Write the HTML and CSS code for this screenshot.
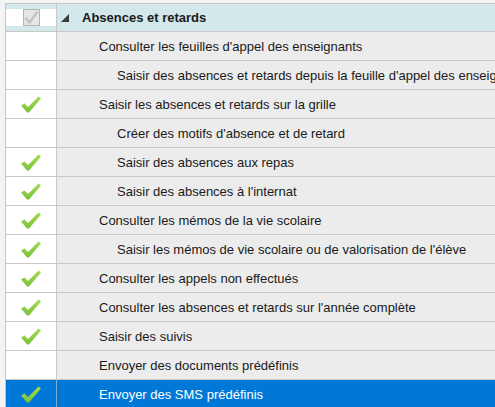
FILE: index.html
```html
<!DOCTYPE html>
<html lang="fr">
<head>
<meta charset="utf-8">
<link rel="stylesheet" href="styles.css">
</head>
<body>
<div class="grid">
  <div class="row head">
    <div class="cell-check"><span class="box"><svg width="17" height="17" viewBox="0 0 17 17"><rect x="0.5" y="0.5" width="16" height="16" fill="#e6e6e6" stroke="#b4b4b4"/><path d="M3 9.5 L6.5 13.5 L14 3.5" fill="none" stroke="#c4c4c4" stroke-width="2.6" stroke-linecap="round" stroke-linejoin="round"/></svg></span></div>
    <div class="cell-label"><span class="tri"></span><span class="title">Absences et retards</span></div>
  </div>
  <div class="row"><div class="cell-check"></div><div class="cell-label l1">Consulter les feuilles d'appel des enseignants</div></div>
  <div class="row"><div class="cell-check"></div><div class="cell-label l2">Saisir des absences et retards depuis la feuille d'appel des enseignants</div></div>
  <div class="row"><div class="cell-check"><svg class="ok" width="22" height="17" viewBox="0 0 22 17"><use href="#chk"/></svg></div><div class="cell-label l1">Saisir les absences et retards sur la grille</div></div>
  <div class="row"><div class="cell-check"></div><div class="cell-label l2">Créer des motifs d'absence et de retard</div></div>
  <div class="row"><div class="cell-check"><svg class="ok" width="22" height="17" viewBox="0 0 22 17"><use href="#chk"/></svg></div><div class="cell-label l2">Saisir des absences aux repas</div></div>
  <div class="row"><div class="cell-check"><svg class="ok" width="22" height="17" viewBox="0 0 22 17"><use href="#chk"/></svg></div><div class="cell-label l2">Saisir des absences à l'internat</div></div>
  <div class="row"><div class="cell-check"><svg class="ok" width="22" height="17" viewBox="0 0 22 17"><use href="#chk"/></svg></div><div class="cell-label l1">Consulter les mémos de la vie scolaire</div></div>
  <div class="row"><div class="cell-check"><svg class="ok" width="22" height="17" viewBox="0 0 22 17"><use href="#chk"/></svg></div><div class="cell-label l2">Saisir les mémos de vie scolaire ou de valorisation de l'élève</div></div>
  <div class="row"><div class="cell-check"><svg class="ok" width="22" height="17" viewBox="0 0 22 17"><use href="#chk"/></svg></div><div class="cell-label l1">Consulter les appels non effectués</div></div>
  <div class="row"><div class="cell-check"><svg class="ok" width="22" height="17" viewBox="0 0 22 17"><use href="#chk"/></svg></div><div class="cell-label l1">Consulter les absences et retards sur l'année complète</div></div>
  <div class="row"><div class="cell-check"><svg class="ok" width="22" height="17" viewBox="0 0 22 17"><use href="#chk"/></svg></div><div class="cell-label l1">Saisir des suivis</div></div>
  <div class="row"><div class="cell-check"></div><div class="cell-label l1">Envoyer des documents prédéfinis</div></div>
  <div class="row sel"><div class="cell-check"><svg class="ok" width="22" height="17" viewBox="0 0 22 17"><use href="#chk"/></svg></div><div class="cell-label l1">Envoyer des SMS prédéfinis</div></div>
</div>
<svg width="0" height="0" class="defs">
  <defs>
    <linearGradient id="g" x1="0" y1="0" x2="0" y2="1">
      <stop offset="0" stop-color="#a6dc52"/>
      <stop offset="1" stop-color="#78c23a"/>
    </linearGradient>
    <path id="chk" d="M1 9.5 L4.5 7.5 L8 11 L18.5 0.5 L21 2.5 L9 16.5 L7 16.5 Z" fill="url(#g)"/>
  </defs>
</svg>
</body>
</html>
```
FILE: styles.css
```css
html, body {
  margin: 0;
  padding: 0;
}
body {
  background: #f4f4f4;
  font-family: "Liberation Sans", Arial, sans-serif;
  font-size: 13px;
  color: #1a1a1a;
  overflow: hidden;
  height: 407px;
}
.grid {
  margin-top: 3px;
  margin-left: 5px;
  border-top: 1px solid #c6c6c6;
  border-left: 1px solid #c6c6c6;
  display: flex;
  flex-direction: column;
}
.row {
  display: flex;
  height: 28px;
  border-bottom: 1px solid #c8c8c8;
  background: #ececec;
}
.cell-check {
  width: 50px;
  flex: none;
  background: #ffffff;
  border-right: 1px solid #c8c8c8;
  display: flex;
  align-items: center;
  justify-content: center;
}
.cell-label {
  flex: 1;
  min-width: 0;
  white-space: nowrap;
  overflow: hidden;
  display: flex;
  align-items: center;
}
.l1 { padding-left: 42px; }
.l2 { padding-left: 60px; }
.head {
  height: 27px;
  background: #d3e8eb;
}
.head .cell-check {
  background: #d3e8eb;
}
.head .box {
  display: flex;
  background: #ffffff;
  width: 50px;
  height: 17px;
  justify-content: center;
  align-items: center;
}
.tri {
  width: 0;
  height: 0;
  margin-left: 4px;
  border-left: 8px solid transparent;
  border-bottom: 8px solid #3c3c3c;
  margin-right: 13px;
  margin-top: 1px;
}
.title {
  font-weight: bold;
}
.ok {
  margin-top: 1px;
}
.sel {
  background: #0078d7;
  color: #ffffff;
}
.sel .cell-check {
  background: #0078d7;
  border-right-color: #7fa9d6;
}
.defs {
  position: absolute;
}
```
